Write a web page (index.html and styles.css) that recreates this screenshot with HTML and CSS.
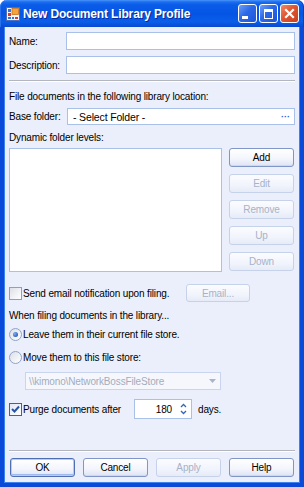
FILE: index.html
```html
<!DOCTYPE html>
<html lang="en">
<head>
    <meta charset="UTF-8">
    <title>New Document Library Profile</title>
    <link rel="stylesheet" href="styles.css">
</head>
<body>
    <div class="window">
        <div class="titlebar">
            <svg class="app-icon" width="14" height="14" viewBox="0 0 14 14">
                <rect x="0.5" y="0.5" width="13" height="13" fill="#f4f6fb" stroke="#4d6fb8"/>
                <rect x="2" y="2" width="3" height="3" fill="#3a6fd6"/>
                <rect x="2" y="6" width="3" height="3" fill="#d83a2a"/>
                <rect x="2" y="10" width="3" height="2" fill="#3a6fd6"/>
                <rect x="6" y="1.5" width="6.5" height="6" fill="#f2a33a" stroke="#c7701a" stroke-width="0.8"/>
                <rect x="6" y="10" width="2" height="2" fill="#3a6fd6"/>
                <rect x="9" y="10" width="3" height="2" fill="#d83a2a"/>
            </svg>
            <span class="title">New Document Library Profile</span>
            <div class="caption-buttons">
                <span class="cap-btn cap-min"><span class="glyph-min"></span></span>
                <span class="cap-btn cap-max"><span class="glyph-max"></span></span>
                <span class="cap-btn cap-close">
                    <svg width="11" height="11" viewBox="0 0 11 11">
                        <path d="M2 2 L9 9 M9 2 L2 9" stroke="#fff" stroke-width="2.2" stroke-linecap="square"/>
                    </svg>
                </span>
            </div>
        </div>

        <div class="client">
            <div class="field-row row-name">
                <span class="field-label">Name:</span>
                <div class="textbox"></div>
            </div>
            <div class="field-row row-desc">
                <span class="field-label">Description:</span>
                <div class="textbox"></div>
            </div>

            <div class="separator sep-top"></div>

            <div class="text-line line-location">File documents in the following library location:</div>

            <div class="field-row row-base">
                <span class="field-label wide">Base folder:</span>
                <div class="textbox folder-box">
                    <span>- Select Folder -</span>
                    <span class="browse">···</span>
                </div>
            </div>

            <div class="text-line line-dynamic">Dynamic folder levels:</div>

            <div class="levels">
                <div class="listbox"></div>
                <div class="side-buttons">
                    <div class="btn">Add</div>
                    <div class="btn disabled">Edit</div>
                    <div class="btn disabled">Remove</div>
                    <div class="btn disabled">Up</div>
                    <div class="btn disabled">Down</div>
                </div>
            </div>

            <div class="email-row">
                <span class="checkbox"></span>
                <span class="check-text">Send email notification upon filing.</span>
                <div class="btn disabled email-btn">Email...</div>
            </div>

            <div class="text-line line-when">When filing documents in the library...</div>

            <div class="radio-row radio-leave">
                <span class="radio checked"></span>
                <span class="check-text">Leave them in their current file store.</span>
            </div>
            <div class="radio-row radio-move">
                <span class="radio"></span>
                <span class="check-text">Move them to this file store:</span>
            </div>

            <div class="combo disabled">
                <span>\\kimono\NetworkBossFileStore</span>
                <svg class="combo-arrow" width="7" height="4" viewBox="0 0 7 4">
                    <path d="M0 0 H7 L3.5 4 Z" fill="#a9b4c8"/>
                </svg>
            </div>

            <div class="purge-row">
                <span class="checkbox checked">
                    <svg width="11" height="11" viewBox="0 0 11 11">
                        <path d="M2 5 L4.5 7.5 L9 2.5" fill="none" stroke="#2a55a6" stroke-width="2"/>
                    </svg>
                </span>
                <span class="check-text purge-text">Purge documents after</span>
                <div class="updown">
                    <span class="updown-value">180</span>
                    <svg class="spin" width="7" height="14" viewBox="0 0 7 14">
                        <path d="M1 5 L3.5 2.5 L6 5" fill="none" stroke="#3a63b8" stroke-width="1.3"/>
                        <path d="M1 9 L3.5 11.5 L6 9" fill="none" stroke="#3a63b8" stroke-width="1.3"/>
                    </svg>
                </div>
                <span class="days">days.</span>
            </div>

            <div class="separator sep-bottom"></div>

            <div class="dialog-buttons">
                <div class="btn default">OK</div>
                <div class="btn">Cancel</div>
                <div class="btn disabled">Apply</div>
                <div class="btn">Help</div>
            </div>
        </div>
    </div>
</body>
</html>
```

FILE: styles.css
```css
body {
    margin: 0;
    background-color: #ffffff;
    font-family: "Liberation Sans", Arial, sans-serif;
    font-size: 10px;
    letter-spacing: -0.15px;
    color: #000;
}
.window {
    width: 304px;
    height: 487px;
    display: flex;
    flex-direction: column;
}
.titlebar {
    height: 27px;
    flex-shrink: 0;
    display: flex;
    align-items: center;
    border-radius: 7px 7px 0 0;
    background: linear-gradient(to bottom, #4a95fa 0, #1a6cef 2px, #0a5ce8 5px, #0455e4 14px, #0a5ee9 22px, #0848cf 27px);
    box-shadow: inset 1px 0 0 #2a72ec, inset -1px 0 0 #0a3ec8;
}
.app-icon {
    margin-left: 6px;
    margin-top: 1px;
}
.title {
    margin-left: 3px;
    margin-top: 1px;
    color: #fff;
    font-weight: bold;
    font-size: 12px;
    letter-spacing: -0.15px;
    text-shadow: 1px 1px 0 #0a2a9a;
}
.caption-buttons {
    margin-left: auto;
    margin-right: 5px;
    display: flex;
    gap: 2px;
}
.cap-btn {
    width: 17px;
    height: 17px;
    border: 1px solid #fff;
    border-radius: 3px;
    display: flex;
    align-items: center;
    justify-content: center;
    position: relative;
}
.cap-min, .cap-max {
    background: linear-gradient(135deg, #6d9ff7 0%, #2b68e8 45%, #1c56da 100%);
}
.cap-close {
    background: linear-gradient(135deg, #f08a66 0%, #e0552f 45%, #c8401c 100%);
}
.glyph-min {
    width: 6px;
    height: 3px;
    background: #fff;
    margin-top: 8px;
    margin-right: 5px;
}
.glyph-max {
    width: 7px;
    height: 6px;
    border: 1px solid #fff;
    border-top-width: 3px;
}
.client {
    flex: 1;
    background-color: #eaeffb;
    border: 4px solid #0a4ad8;
    border-top: none;
    box-shadow: inset 1px 0 0 #3d80f0, inset -1px 0 0 #3d80f0, inset 0 -1px 0 #3d80f0;
    padding: 0 5px;
    display: flex;
    flex-direction: column;
}
.field-row {
    display: flex;
    align-items: center;
    height: 18px;
}
.row-name {
    margin-top: 5px;
}
.row-desc {
    margin-top: 6px;
}
.field-label {
    width: 57px;
    flex-shrink: 0;
}
.field-label.wide {
    width: 58px;
}
.textbox {
    flex: 1;
    height: 100%;
    box-sizing: border-box;
    background: #fff;
    border: 1px solid #a9c0e8;
}
.folder-box {
    display: flex;
    align-items: center;
    justify-content: space-between;
    padding: 0 4px 0 5px;
    font-size: 10.5px;
}
.browse {
    color: #2f5fd0;
    letter-spacing: 0;
    font-weight: bold;
    font-size: 9px;
}
.row-base {
    margin-top: 5px;
    height: 17px;
}
.separator {
    height: 1px;
    border-top: 1px solid #b3b6bc;
    background: #fff;
}
.sep-top {
    margin-top: 6px;
}
.sep-bottom {
    margin-top: 31px;
}
.text-line {
    height: 13px;
    line-height: 13px;
}
.line-location {
    margin-top: 8px;
}
.line-dynamic {
    margin-top: 6px;
}
.levels {
    margin-top: 4px;
    height: 124px;
    display: flex;
    justify-content: space-between;
}
.listbox {
    width: 213px;
    box-sizing: border-box;
    background: #fff;
    border: 1px solid #a9c0e8;
}
.side-buttons {
    width: 65px;
    margin-right: 1px;
    display: flex;
    flex-direction: column;
    gap: 7px;
}
.btn {
    height: 19px;
    box-sizing: border-box;
    display: flex;
    align-items: center;
    justify-content: center;
    border: 1px solid #7f96c6;
    border-radius: 3px;
    background: linear-gradient(to bottom, #ffffff 0%, #f3f5fc 60%, #dde4f4 100%);
    box-shadow: inset 0 -1px 0 #cfd8ee;
}
.btn.disabled {
    color: #a7b2c8;
    border-color: #c6d2ea;
    background: linear-gradient(to bottom, #fbfcff 0%, #f1f4fc 60%, #e6ebf7 100%);
    box-shadow: none;
}
.btn.default {
    border-color: #4f6fb4;
    box-shadow: inset 0 0 0 1px #b5cdf6, inset 0 -2px 0 #9fbbee;
}
.email-row {
    margin-top: 12px;
    height: 18px;
    display: flex;
    align-items: center;
}
.email-btn {
    width: 64px;
    height: 18px;
    margin-left: auto;
    margin-right: 45px;
}
.checkbox {
    width: 13px;
    height: 13px;
    box-sizing: border-box;
    border: 1px solid #8f9fbf;
    background: linear-gradient(135deg, #dcdfe6 0%, #f3f4f7 60%, #ffffff 100%);
    display: flex;
    align-items: center;
    justify-content: center;
    flex-shrink: 0;
}
.checkbox.checked {
    border-color: #3b62b0;
    background: linear-gradient(135deg, #e4e8f2 0%, #ffffff 100%);
}
.check-text {
    margin-left: 1px;
}
.line-when {
    margin-top: 7px;
}
.radio-row {
    height: 13px;
    display: flex;
    align-items: center;
}
.radio-leave {
    margin-top: 6px;
}
.radio-move {
    margin-top: 10px;
}
.radio {
    width: 13px;
    height: 13px;
    box-sizing: border-box;
    border-radius: 50%;
    border: 1px solid #8fa3c8;
    background: linear-gradient(135deg, #dcdfe6 0%, #ffffff 100%);
    display: flex;
    align-items: center;
    justify-content: center;
    flex-shrink: 0;
}
.radio.checked::after {
    content: "";
    width: 5px;
    height: 5px;
    border-radius: 50%;
    background: radial-gradient(circle at 35% 35%, #7eaef0 0%, #2e62c0 70%);
}
.combo {
    margin-top: 8px;
    margin-left: 16px;
    width: 196px;
    height: 18px;
    box-sizing: border-box;
    border: 1px solid #c9d5ee;
    background: #f5f7fc;
    color: #a3acbe;
    display: flex;
    align-items: center;
    justify-content: space-between;
    padding: 0 4px 0 3px;
}
.purge-row {
    margin-top: 9px;
    height: 20px;
    display: flex;
    align-items: center;
}
.purge-text {
    width: 111px;
}
.updown {
    width: 58px;
    height: 20px;
    box-sizing: border-box;
    border: 1px solid #a9c0e8;
    background: #fff;
    display: flex;
    align-items: center;
    justify-content: flex-end;
    padding-right: 4px;
}
.updown-value {
    margin-right: 8px;
}
.days {
    margin-left: 6px;
}
.dialog-buttons {
    margin-top: 6px;
    padding-left: 1px;
    display: flex;
    gap: 8px;
}
.dialog-buttons .btn {
    width: 65px;
}
```
